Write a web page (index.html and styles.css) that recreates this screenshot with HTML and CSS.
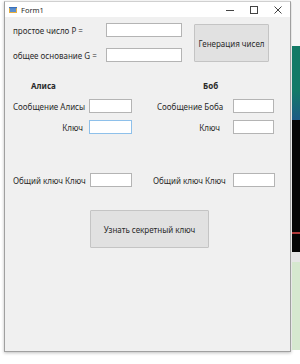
FILE: index.html
```html
<!DOCTYPE html>
<html>

<head>
    <title>Form1</title>
    <link rel="stylesheet" href="styles.css">
</head>

<body>
    <div class="window">
        <div class="title-bar">
            <svg class="app-icon" width="8" height="8" viewBox="0 0 8 8">
                <rect x="0" y="1" width="8" height="6" fill="#e8b040"/>
                <rect x="1" y="2" width="6" height="4" fill="#5a8fd0"/>
                <rect x="0" y="1" width="8" height="1.2" fill="#3a6fb8"/>
            </svg>
            <span class="title">Form1</span>
            <div class="caption-buttons">
                <svg width="8" height="8" viewBox="0 0 8 8"><line x1="0" y1="4.5" x2="8" y2="4.5" stroke="#444" stroke-width="1"/></svg>
                <svg width="8" height="8" viewBox="0 0 8 8"><rect x="0.5" y="0.5" width="7" height="7" fill="none" stroke="#444" stroke-width="1"/></svg>
                <svg width="8" height="8" viewBox="0 0 8 8"><path d="M0.5 0.5 L7.5 7.5 M7.5 0.5 L0.5 7.5" stroke="#444" stroke-width="1"/></svg>
            </div>
        </div>

        <div class="client">
            <div class="generator">
                <div class="params">
                    <div class="param-row">
                        <label class="param-label">простое число P =</label>
                        <input type="text" class="textbox wide">
                    </div>
                    <div class="param-row">
                        <label class="param-label">общее основание G =</label>
                        <input type="text" class="textbox wide">
                    </div>
                </div>
                <button type="button" class="btn gen-btn">Генерация чисел</button>
            </div>

            <div class="parties">
                <div class="party alice">
                    <div class="party-name">Алиса</div>
                    <label>Сообщение Алисы</label>
                    <input type="text" class="textbox">
                    <label>Ключ</label>
                    <input type="text" class="textbox focused">
                </div>
                <div class="party bob">
                    <div class="party-name">Боб</div>
                    <label>Сообщение Боба</label>
                    <input type="text" class="textbox">
                    <label>Ключ</label>
                    <input type="text" class="textbox">
                </div>
            </div>

            <div class="shared">
                <label class="shared-label">Общий ключ Ключ</label>
                <input type="text" class="textbox">
                <label class="shared-label right">Общий ключ Ключ</label>
                <input type="text" class="textbox">
            </div>

            <button type="button" class="btn secret-btn">Узнать секретный ключ</button>
        </div>
    </div>

    <div class="desktop-strip">
        <div class="strip-top"></div>
        <div class="strip-teal"></div>
        <div class="strip-black"><div class="strip-red"></div></div>
        <div class="strip-gray"></div>
        <div class="strip-green"></div>
    </div>
</body>

</html>
```

FILE: styles.css
```css
body {
    margin: 0;
    width: 300px;
    height: 364px;
    overflow: hidden;
    background-color: #ffffff;
    font-family: "Noto Sans", "Open Sans", sans-serif;
    font-size: 8px;
    color: #2a2a2a;
    display: flex;
    align-items: flex-start;
}

.window {
    margin: 1px 0 0 4px;
    width: 286px;
    height: 349px;
    border: 1px solid #a0a0a0;
    border-top-color: #d0d0d0;
    background-color: #f0f0f0;
    box-shadow: 0 1px 3px rgba(0, 0, 0, 0.25);
    display: flex;
    flex-direction: column;
}

.title-bar {
    height: 15px;
    background-color: #ffffff;
    display: flex;
    align-items: center;
    padding-left: 4px;
}

.app-icon {
    margin-right: 4px;
}

.title {
    font-size: 7.5px;
}

.caption-buttons {
    margin-left: auto;
    display: flex;
    gap: 16px;
    padding-right: 8px;
}

.client {
    flex: 1;
    padding: 6px 0 0 8px;
}

.textbox {
    display: block;
    box-sizing: border-box;
    height: 14px;
    width: 43px;
    margin: 0;
    padding: 0;
    border: 1px solid #b4b4b4;
    background-color: #ffffff;
}

.textbox.wide {
    width: 76px;
}

.textbox.focused {
    border-color: #8ec0ea;
}

.btn {
    box-sizing: border-box;
    margin: 0;
    padding: 0;
    background-color: #e1e1e1;
    border: 1px solid #c4c4c4;
    border-radius: 1px;
    font-family: inherit;
    font-size: 8px;
    color: #2a2a2a;
}

.generator {
    display: flex;
    align-items: flex-start;
}

.params {
    display: flex;
    flex-direction: column;
    gap: 11px;
}

.param-row {
    display: flex;
    align-items: center;
}

.param-label {
    width: 93px;
}

.gen-btn {
    width: 75px;
    height: 38px;
    margin: 1px 0 0 12px;
}

.parties {
    display: flex;
    margin-top: 18px;
}

.party {
    display: grid;
    align-items: center;
    row-gap: 7px;
}

.party label {
    text-align: right;
    white-space: nowrap;
}

.party-name {
    grid-column: 1 / 3;
    font-weight: bold;
    height: 12px;
    line-height: 12px;
}

.alice {
    grid-template-columns: 70px 43px;
    column-gap: 6px;
}

.alice .party-name {
    padding-left: 18px;
}

.bob {
    grid-template-columns: 63px 41px;
    column-gap: 13px;
    margin-left: 25px;
}

.bob .party-name {
    padding-left: 46px;
}

.bob .textbox {
    width: 41px;
}

.shared {
    display: flex;
    align-items: center;
    margin-top: 39px;
}

.shared .textbox {
    width: 42px;
}

.shared-label {
    width: 77px;
    white-space: nowrap;
}

.shared-label.right {
    width: 80px;
    margin-left: 21px;
}

.secret-btn {
    display: block;
    width: 119px;
    height: 38px;
    margin: 23px 0 0 77px;
}

.desktop-strip {
    width: 8px;
    margin-left: 1px;
    height: 364px;
    display: flex;
    flex-direction: column;
}

.strip-top {
    height: 46px;
    background-color: #f6f6f6;
}

.strip-teal {
    height: 74px;
    background: linear-gradient(#137a66 0%, #137a68 60%, #1c5a86 100%);
}

.strip-black {
    height: 132px;
    background-color: #050505;
    padding-top: 112px;
    box-sizing: border-box;
}

.strip-red {
    height: 2px;
    background-color: #b03a3a;
}

.strip-gray {
    height: 10px;
    background-color: #e6e6e6;
}

.strip-green {
    height: 88px;
    background-color: #d6e8cf;
}
```
